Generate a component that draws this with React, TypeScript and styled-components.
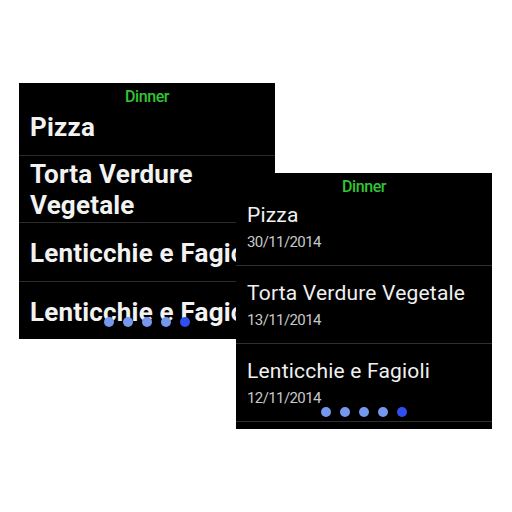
import React from "react";
import styled, { createGlobalStyle } from "styled-components";

const Global = createGlobalStyle`
  html, body { margin: 0; padding: 0; background: #ffffff; }
  body { font-family: Roboto, "Noto Sans", sans-serif; }
`;

const Canvas = styled.div`
  position: relative;
  width: 512px;
  height: 512px;
  background: #ffffff;
  overflow: hidden;
`;

const Screen = styled.div<{ $x: number; $y: number }>`
  position: absolute;
  left: ${(p) => p.$x}px;
  top: ${(p) => p.$y}px;
  width: 256px;
  height: 256px;
  background: #000000;
  overflow: hidden;
`;

const Header = styled.div`
  position: absolute;
  top: 0;
  left: 0;
  right: 0;
  height: 26px;
  line-height: 26px;
  padding-top: 1px;
  text-align: center;
  color: #33c433;
  font-family: Roboto, sans-serif;
  font-weight: 500;
  font-size: 16px;
  letter-spacing: -0.4px;
  z-index: 1;
`;

const List = styled.div<{ $top: number }>`
  display: flex;
  flex-direction: column;
  padding-top: ${(p) => p.$top}px;
`;

const BoldRow = styled.div`
  display: flex;
  align-items: center;
  min-height: 54px;
  padding: 3px 11px 1px;
  border-bottom: 1px solid #2a2a2a;
  color: #f2f2f2;
  font-family: Roboto, sans-serif;
  font-weight: 700;
  font-size: 26px;
  line-height: 31px;
  letter-spacing: 0.2px;
  white-space: nowrap;
`;

const BoldText = styled.span<{ $wrap?: boolean }>`
  white-space: ${(p) => (p.$wrap ? "normal" : "nowrap")};
  width: ${(p) => (p.$wrap ? "200px" : "auto")};
`;

const DetailRow = styled.div`
  display: flex;
  flex-direction: column;
  padding: 14px 11px 9px;
  border-bottom: 1px solid #303030;
`;

const Title = styled.div`
  color: #f0f0f0;
  font-family: Roboto, sans-serif;
  font-weight: 400;
  font-size: 21px;
  line-height: 26px;
  letter-spacing: 0.2px;
  white-space: nowrap;
`;

const DateText = styled.div`
  color: #c8c8c8;
  font-family: Roboto, sans-serif;
  font-weight: 400;
  font-size: 15px;
  line-height: 28px;
  letter-spacing: -0.6px;
`;

const Dots = styled.div`
  position: absolute;
  left: 0;
  right: 0;
  bottom: 12px;
  display: flex;
  justify-content: center;
  gap: 9px;
  z-index: 2;
`;

const Dot = styled.span<{ $active?: boolean }>`
  width: 10px;
  height: 10px;
  border-radius: 50%;
  background: ${(p) => (p.$active ? "#2f4ff0" : "#7597ee")};
`;

const PageDots = () => (
  <Dots>
    {[0, 1, 2, 3, 4].map((i) => (
      <Dot key={i} $active={i === 4} />
    ))}
  </Dots>
);

const items = [
  { name: "Pizza", date: "30/11/2014" },
  { name: "Torta Verdure Vegetale", date: "13/11/2014" },
  { name: "Lenticchie e Fagioli", date: "12/11/2014" },
  { name: "Lenticchie e Fagioli", date: "12/11/2014" },
];

export default function App() {
  return (
    <>
      <Global />
      <Canvas>
        <Screen $x={19} $y={83}>
          <Header>Dinner</Header>
          <List $top={14}>
            <BoldRow>
              <BoldText>Pizza</BoldText>
            </BoldRow>
            <BoldRow>
              <BoldText $wrap>Torta Verdure Vegetale</BoldText>
            </BoldRow>
            <BoldRow>
              <BoldText>Lenticchie e Fagioli</BoldText>
            </BoldRow>
            <BoldRow>
              <BoldText>Lenticchie e Fagioli</BoldText>
            </BoldRow>
          </List>
          <PageDots />
        </Screen>
        <Screen $x={236} $y={173}>
          <Header>Dinner</Header>
          <List $top={15}>
            {items.map((it, i) => (
              <DetailRow key={i}>
                <Title>{it.name}</Title>
                <DateText>{it.date}</DateText>
              </DetailRow>
            ))}
          </List>
          <PageDots />
        </Screen>
      </Canvas>
    </>
  );
}
